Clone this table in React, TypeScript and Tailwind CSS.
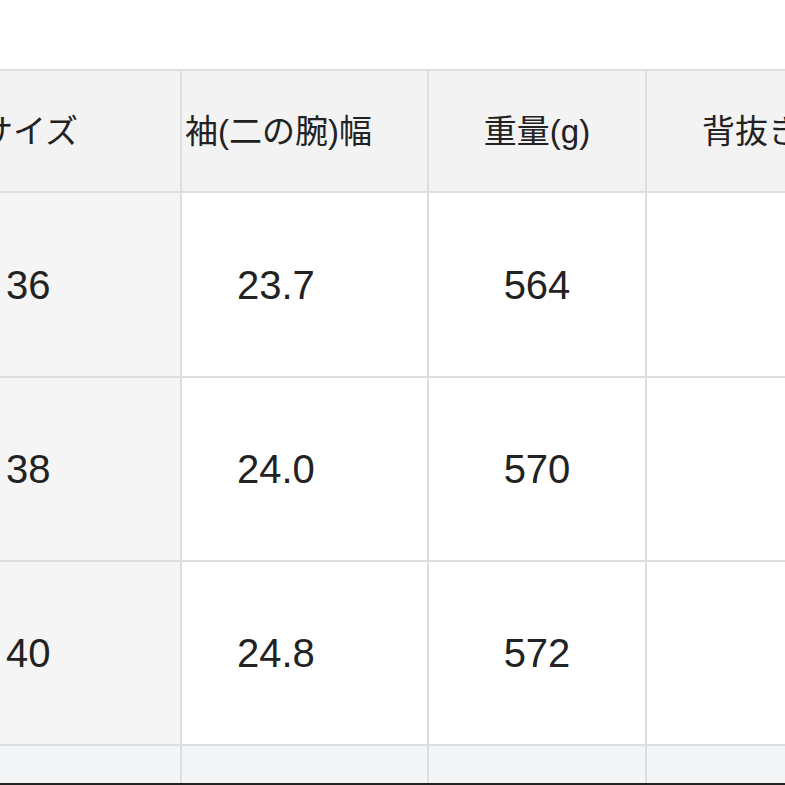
import React from "react";

const font = { fontFamily: '"Liberation Sans", "Noto Sans CJK JP", sans-serif' };

const rows = [
  ["36", "23.7", "564"],
  ["38", "24.0", "570"],
  ["40", "24.8", "572"],
];

export default function App() {
  return (
    <div className="w-[785px] h-[785px] bg-white flex flex-col overflow-hidden text-[#222]" style={font}>
      <div className="h-[69px] shrink-0" />
      <div className="flex-1 overflow-hidden bg-[#dcdfe2] pt-[2px]">
        <div className="grid grid-cols-[180px_245px_216px_220px] grid-rows-[120px_183px_182px_182px_60px] gap-[2px] w-[900px]">
          <div className="bg-[#f3f3f4] flex items-center overflow-hidden">
            <span className="ml-[-20px] whitespace-nowrap text-[33px] leading-none">サイズ</span>
          </div>
          <div className="bg-[#f3f3f4] flex items-center">
            <span className="pl-[3px] whitespace-nowrap text-[33px] leading-none">袖(二の腕)幅</span>
          </div>
          <div className="bg-[#f3f3f4] flex items-center justify-center">
            <span className="whitespace-nowrap text-[33px] leading-none">重量(g)</span>
          </div>
          <div className="bg-[#f3f3f4] flex items-center">
            <span className="pl-[55px] whitespace-nowrap text-[33px] leading-none">背抜き/総裏</span>
          </div>
          {rows.map((r) => (
            <React.Fragment key={r[0]}>
              <div className="bg-[#f5f5f5] flex items-center">
                <span className="pl-[6px] text-[40px] leading-none">{r[0]}</span>
              </div>
              <div className="bg-white flex items-center">
                <span className="pl-[55px] text-[40px] leading-none">{r[1]}</span>
              </div>
              <div className="bg-white flex items-center justify-center">
                <span className="text-[40px] leading-none">{r[2]}</span>
              </div>
              <div className="bg-white" />
            </React.Fragment>
          ))}
          <div className="bg-[#f4f5f6]" />
          <div className="bg-[#f4f5f6]" />
          <div className="bg-[#f4f5f6]" />
          <div className="bg-[#f4f5f6]" />
        </div>
      </div>
      <div className="h-[2px] shrink-0 bg-[#222]" />
    </div>
  );
}
